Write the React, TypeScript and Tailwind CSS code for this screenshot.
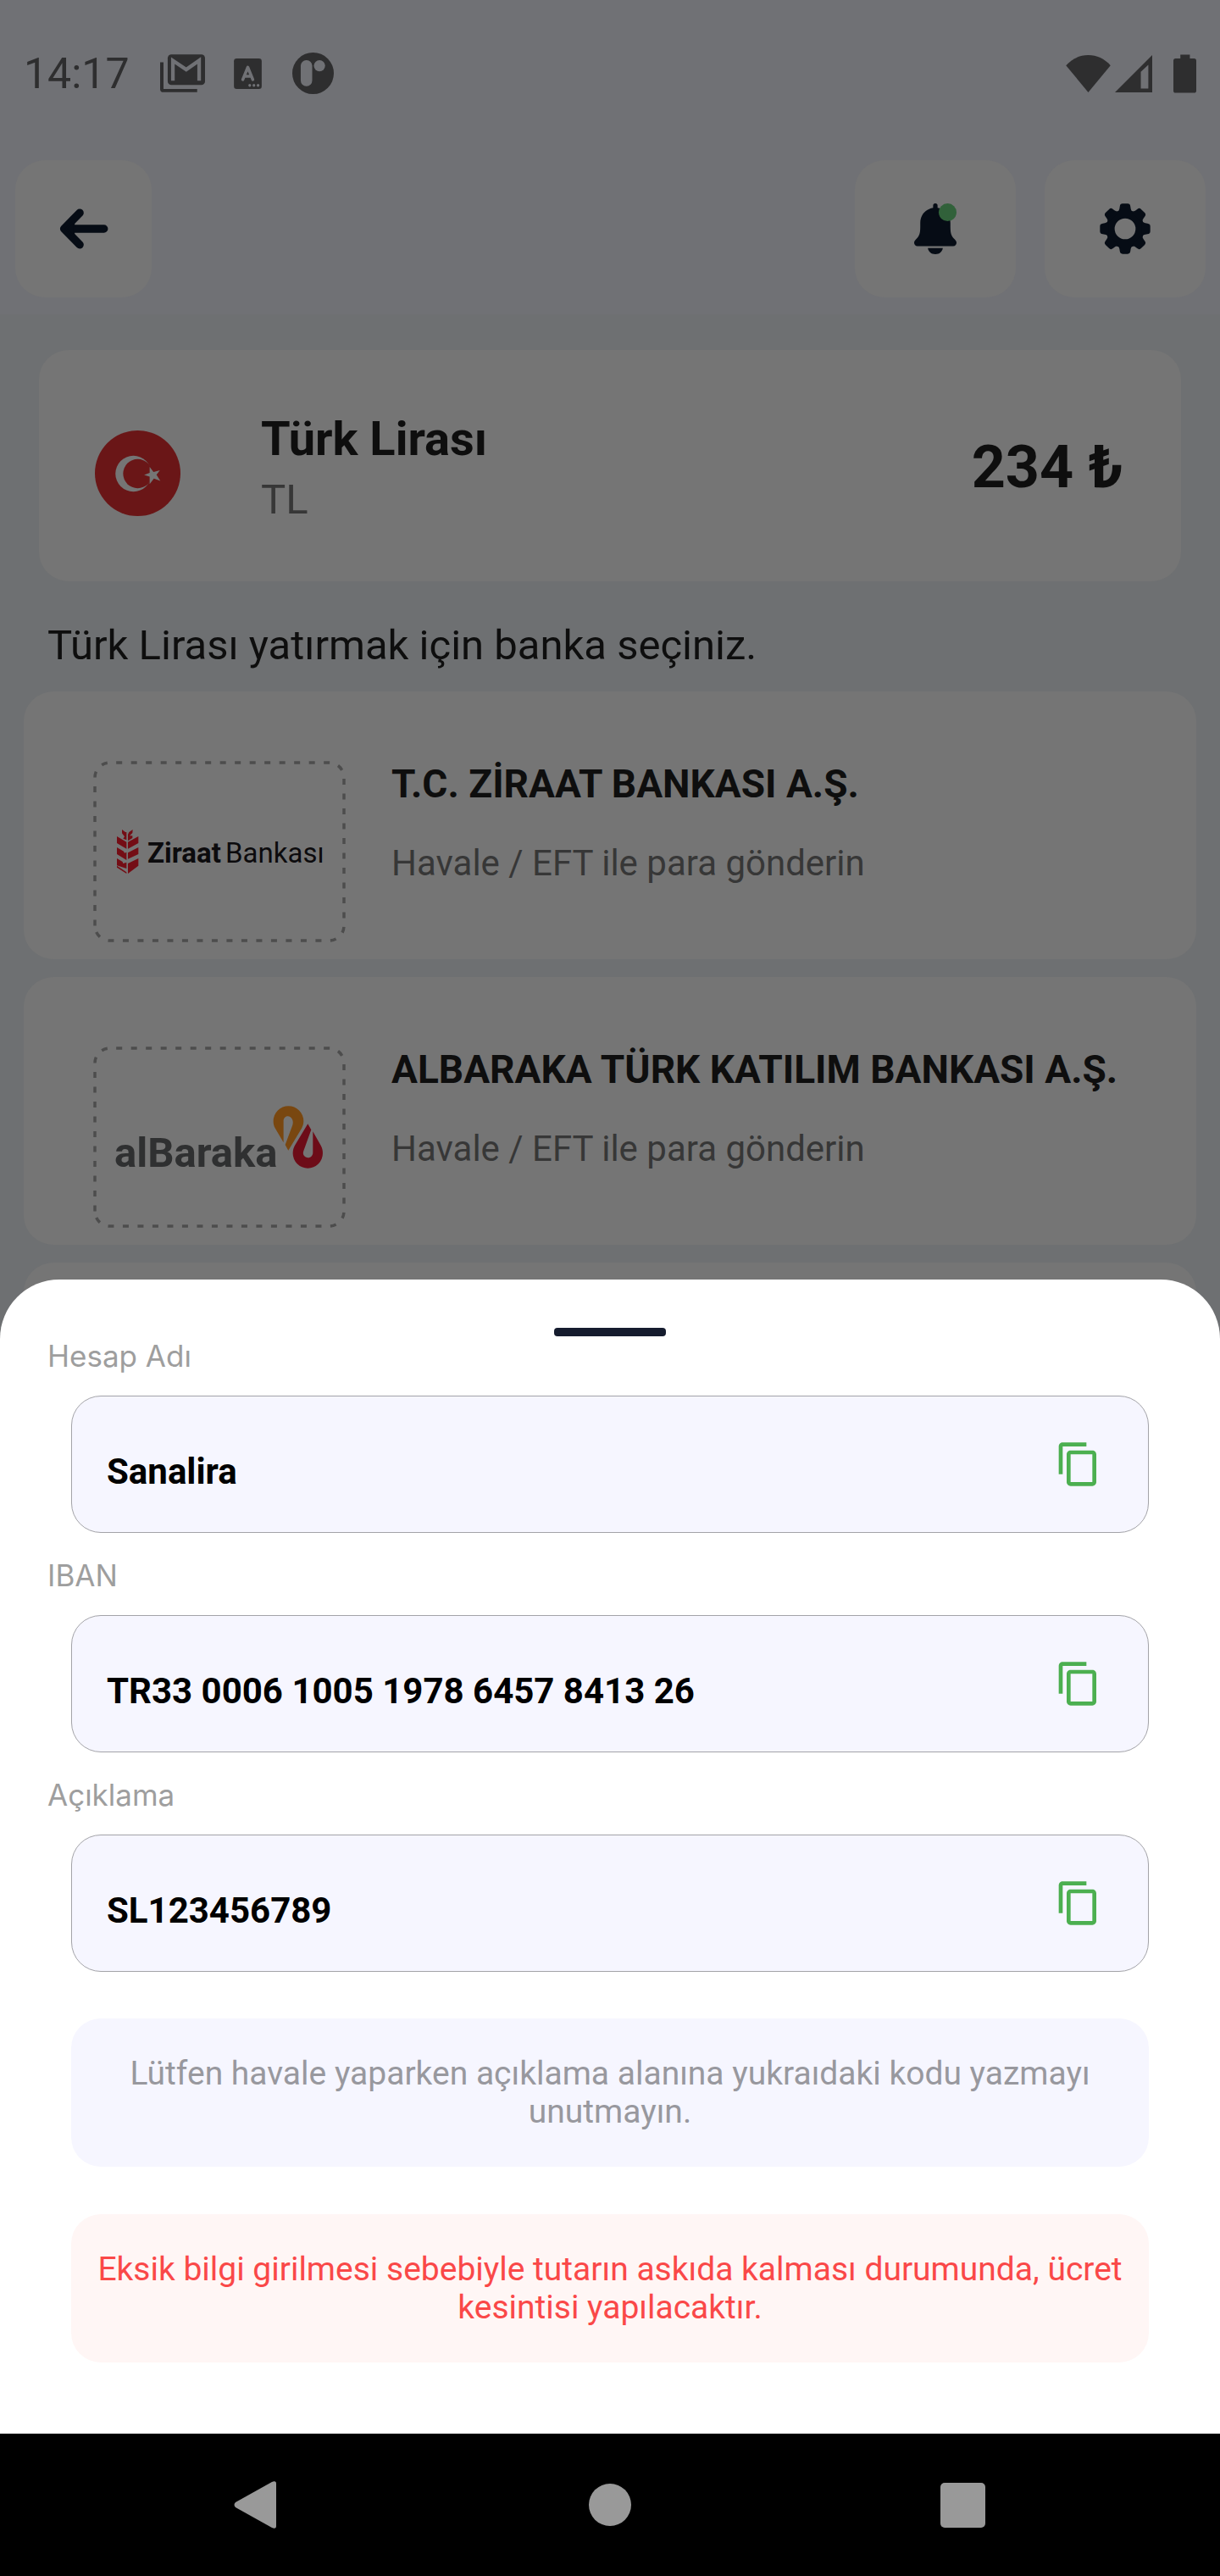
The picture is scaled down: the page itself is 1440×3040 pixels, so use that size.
import React from "react";
import { MdContentCopy } from "react-icons/md";

function GmailIcon() {
  return (
    <svg viewBox="0 0 160 135" className="h-[45px] w-[53px]" aria-hidden="true">
      <path d="M0 28h12v95h120v12H12a12 12 0 0 1-12-12Z" fill="#2e2e2f" />
      <rect x="27" y="0" width="133" height="109" rx="13" fill="#2e2e2f" />
      <path d="M45.500 94V22L93 54l46-32v72" fill="none" stroke="#707175" strokeWidth="13" />
    </svg>
  );
}

function KeyboardIcon() {
  return (
    <svg viewBox="0 0 100 110" className="h-9 w-[33px]" aria-hidden="true">
      <rect width="100" height="110" rx="10" fill="#2e2e2f" />
      <path d="M32 76 50 32l18 44M39 64h22" fill="none" stroke="#707175" strokeWidth="11" strokeLinecap="round" strokeLinejoin="round" />
      <g fill="#707175">
        <circle cx="57" cy="97" r="5" />
        <circle cx="72" cy="97" r="5" />
        <circle cx="87" cy="97" r="5" />
      </g>
    </svg>
  );
}

function AppDotIcon() {
  return (
    <svg viewBox="0 0 148 148" className="size-[49px]" aria-hidden="true">
      <circle cx="74" cy="74" r="74" fill="#2e2e2f" />
      <rect x="30" y="27" width="41" height="93" rx="20" fill="#707175" />
      <circle cx="97" cy="47" r="20" fill="#707175" />
    </svg>
  );
}

function StatusBar() {
  return (
    <div className="flex h-[173px] items-center justify-between px-7">
      <div className="flex items-center">
        <span className="w-[161px] text-[50px] leading-[58px] text-[#2e2e2f]">14:17</span>
        <GmailIcon />
        <span className="ml-[34px] flex">
          <KeyboardIcon />
        </span>
        <span className="ml-9 flex">
          <AppDotIcon />
        </span>
      </div>
      <div className="flex items-center">
        <svg viewBox="0 0 160 134" className="h-11 w-[53px]" fill="#2e2e2f" aria-hidden="true">
          <path d="M80 134 0 37C22 13 50 0 80 0s58 13 80 37Z" />
        </svg>
        <svg viewBox="0 0 134 134" className="ml-[5px] size-11" fill="#2e2e2f" aria-hidden="true">
          <path fillRule="evenodd" d="M0 134 134 0v134ZM93 60v60h27V35Z" />
        </svg>
        <svg viewBox="0 0 82 137" className="ml-[25px] h-[46px] w-[27px]" fill="#2e2e2f" aria-hidden="true">
          <path d="M25 0h34v14h15a8 8 0 0 1 8 8v107a8 8 0 0 1-8 8H8a8 8 0 0 1-8-8V22a8 8 0 0 1 8-8h17Z" />
        </svg>
      </div>
    </div>
  );
}

function BackIcon() {
  return (
    <svg viewBox="0 0 176 146" className="h-12 w-[58px]" fill="none" stroke="#060c15" strokeWidth="29" strokeLinecap="round" strokeLinejoin="round" aria-hidden="true">
      <path d="M160 73H20M73 16 17 73l56 57" />
      <path d="M24 73 52 46v54Z" fill="#060c15" strokeWidth="6" />
    </svg>
  );
}

function BellIcon() {
  return (
    <svg viewBox="0 0 152 182" className="h-[60px] w-[50px]" aria-hidden="true">
      <path
        fill="#060c15"
        d="M68 8a8 8 0 0 1 16 0v8c28 5 46 26 46 54v14c0 24 4 34 15 44 5 5 7 8 7 13 0 7-5 12-12 12H12c-7 0-12-5-12-12 0-5 2-8 7-13 11-10 15-20 15-44V70c0-28 18-49 46-54Z"
      />
      <path fill="#060c15" d="M49 160h54c-3 14-12 22-27 22s-24-8-27-22Z" />
      <circle cx="120" cy="32" r="32" fill="#31613a" />
    </svg>
  );
}

const TEETH = [0, 45, 90, 135, 180, 225, 270, 315];

function GearIcon() {
  return (
    <svg viewBox="-91 -91 182 182" className="size-[60px]" fill="#060c15" aria-hidden="true">
      <circle r="53" fill="none" stroke="#060c15" strokeWidth="31" />
      {TEETH.map((a) => (
        <path
          key={a}
          transform={`rotate(${a})`}
          d="M-30-58C-23-63-20-68-19-80c1-7 4-10 10-10H9c6 0 9 3 10 10 1 12 4 17 11 22Z"
        />
      ))}
    </svg>
  );
}

function TurkishFlag() {
  return (
    <svg viewBox="0 0 100 100" className="mt-[15px] size-[101px] shrink-0" role="img" aria-label="Türk bayrağı">
      <circle cx="50" cy="50" r="50" fill="#6a1617" />
      <circle cx="45" cy="50.500" r="21" fill="#757575" />
      <circle cx="50" cy="50.500" r="17" fill="#6a1617" />
      <path fill="#757575" d="m76 46.500-4 5.300 4.500 7-7.500-2.600-5 6.300V54l-6.500-2 6.500-2.500V42.500l4.500 6Z" />
    </svg>
  );
}

function DashedFrame() {
  return (
    <path
      d="M2 194.500V19.500A17.500 17.500 0 0 1 19.500 2h259A17.500 17.500 0 0 1 296 19.500v175a17.500 17.500 0 0 1-17.500 17.500h-259A17.500 17.500 0 0 1 2 194.500Z"
      fill="none"
      stroke="#4d4d4d"
      strokeWidth="3.5"
      strokeDasharray="7 10.5"
    />
  );
}

function ZiraatLogo() {
  return (
    <svg viewBox="0 0 298 214" className="h-[214px] w-[298px]" role="img" aria-label="Ziraat Bankası">
      <DashedFrame />
      <g transform="translate(28 81) scale(.3333)" fill="#740d15">
        <path d="M0 24 34 44v24L0 48ZM0 63l24 14 3 6 7-3v28L0 87ZM0 102l20 12 2 6 12-4v22L0 127Z" />
        <path d="M76 24 39 44v24l37-20ZM76 63 39 82v22l37-17ZM76 102l-37 18v36l37-28ZM0 128l34 23v5L0 134Z" />
        <path d="M18 0l12 9h4v28l-12-5 5-7-9-12ZM56 0 43 9l-4 8v23l16-10v-8H45l10-10Z" />
      </g>
      <g fill="#0c0b0d" fontFamily="Roboto, sans-serif" fontSize="33">
        <text x="64" y="120" fontWeight="700">Ziraat</text>
        <text x="156" y="120">Bankası</text>
      </g>
    </svg>
  );
}

function AlbarakaLogo() {
  return (
    <svg viewBox="0 0 298 214" className="h-[214px] w-[298px]" role="img" aria-label="Albaraka">
      <DashedFrame />
      <text x="25" y="142" fill="#2f3031" fontFamily="Roboto, sans-serif" fontSize="49" fontWeight="700">
        alBaraka
      </text>
      <g transform="translate(-30 -25) scale(.3333)">
        <path
          fill="#794710"
          d="M764 415 734 364c-4-7-6-15-6-25a53 53 0 0 1 107 0c0 10-3 19-7 26l-47 78-11-20 26-70c5-14-3-31-17-31-9 0-15 8-15 17Z"
        />
        <path
          fill="#6d0c18"
          d="m850 349 12 21-27 75c-5 13 4 24 16 24 10 0 17-8 17-18v-75l28 49c5 9 7 17 7 28a53 53 0 0 1-106 0c0-11 3-20 8-29Z"
        />
      </g>
    </svg>
  );
}

function BankCard({ name, logo }: { name: string; logo: React.ReactNode }) {
  return (
    <button type="button" className="flex h-[316px] items-start rounded-[35px] bg-[#757575] pt-[82px] pl-[82px] text-left">
      <span className="shrink-0">{logo}</span>
      <span className="mt-px ml-[54px] flex flex-col gap-[42px]">
        <span className="text-[46px] leading-[53px] font-bold whitespace-nowrap text-[#0e0e0e]">{name}</span>
        <span className="text-[42px] leading-[49px] text-[#373737]">Havale / EFT ile para gönderin</span>
      </span>
    </button>
  );
}

const FIELDS = [
  { id: "account", label: "Hesap Adı", value: "Sanalira" },
  { id: "iban", label: "IBAN", value: "TR33 0006 1005 1978 6457 8413 26" },
  { id: "note", label: "Açıklama", value: "SL123456789" },
];

function CopyField({ id, label, value }: { id: string; label: string; value: string }) {
  return (
    <div className="flex flex-col">
      <label htmlFor={id} className="ml-14 font-['Inter',sans-serif] text-[35px] leading-[42px] text-[#9e9e9e]">
        {label}
      </label>
      <div className="mx-[84px] mt-[26px] flex h-[162px] items-center rounded-[35px] border border-[#a3a3a8] bg-[#f6f6ff] pr-[54px] pl-[41px]">
        <input
          id={id}
          readOnly
          value={value}
          className="h-full min-w-0 flex-1 bg-transparent pt-4 text-[42px] font-bold text-black outline-none"
        />
        <button type="button" aria-label={`${label} kopyala`} className="text-[#4caf50]">
          <MdContentCopy className="size-14" />
        </button>
      </div>
    </div>
  );
}

function BottomSheet() {
  return (
    <section className="relative -mt-[100px] flex flex-1 flex-col rounded-t-[70px] bg-white pt-[57px] pb-[84px]">
      <div className="mx-auto h-2.5 w-[132px] rounded-[4px] bg-[#151c2e]" />
      <div className="mt-0.5 flex flex-col gap-[29px]">
        {FIELDS.map((f) => (
          <CopyField key={f.id} {...f} />
        ))}
      </div>
      <p className="mx-[84px] mt-[55px] rounded-[35px] bg-[#f6f6ff] px-6 pt-[43px] pb-[42px] text-center text-[39px] leading-[45px] text-[#98989e]">
        Lütfen havale yaparken açıklama alanına yukraıdaki kodu yazmayı unutmayın.
      </p>
      <p className="mx-[84px] mt-14 rounded-[35px] bg-[#fff6f5] px-6 pt-[43px] pb-[42px] text-center text-[39px] leading-[45px] text-[#fa4848]">
        Eksik bilgi girilmesi sebebiyle tutarın askıda kalması durumunda, ücret kesintisi yapılacaktır.
      </p>
    </section>
  );
}

function NavigationBar() {
  return (
    <nav className="grid h-[168px] grid-cols-3 place-items-center bg-black px-24">
      <button type="button" aria-label="Geri">
        <svg viewBox="0 0 56 56" className="size-14" fill="#999" aria-hidden="true">
          <path d="M2 25 45 1q5-2 5 2v50q0 4-5 2L2 31q-3-3 0-6Z" />
        </svg>
      </button>
      <button type="button" aria-label="Ana ekran" className="size-[50px] rounded-full bg-[#999]" />
      <button type="button" aria-label="Son uygulamalar" className="size-[53px] rounded-[5px] bg-[#999]" />
    </nav>
  );
}

export default function App() {
  return (
    <div className="flex min-h-screen flex-col bg-[#6e7072] font-['Roboto',sans-serif]">
      <header className="bg-[#707175] pb-5">
        <StatusBar />
        <div className="flex justify-between pt-4 pr-[17px] pl-[18px]">
          <button type="button" aria-label="Geri" className="flex h-[162px] w-[161px] items-center justify-center rounded-[35px] bg-[#757575]">
            <BackIcon />
          </button>
          <div className="flex gap-[34px]">
            <button type="button" aria-label="Bildirimler" className="flex h-[162px] w-[190px] items-center justify-center rounded-[35px] bg-[#757575]">
              <BellIcon />
            </button>
            <button type="button" aria-label="Ayarlar" className="flex h-[162px] w-[190px] items-center justify-center rounded-[35px] bg-[#757575]">
              <GearIcon />
            </button>
          </div>
        </div>
      </header>

      <main className="flex flex-col">
        <section className="mx-[46px] mt-[42px] flex h-[273px] items-center rounded-[35px] bg-[#757575] pt-[3px] pr-[68px] pl-[66px]">
          <TurkishFlag />
          <div className="ml-[95px] flex flex-1 flex-col gap-2.5">
            <span className="text-[56px] leading-[66px] font-bold text-[#0e0e0e]">Türk Lirası</span>
            <span className="text-[49px] leading-[57px] text-[#373737]">TL</span>
          </div>
          <span className="text-[70px] leading-[82px] font-bold text-[#0e0e0e]">234 ₺</span>
        </section>

        <h1 className="mt-[47px] mb-[25px] ml-14 text-[49px] leading-[58px] text-[#0e0e0e]">
          Türk Lirası yatırmak için banka seçiniz.
        </h1>

        <div className="flex flex-col gap-[21px] px-7">
          <BankCard name="T.C. ZİRAAT BANKASI A.Ş." logo={<ZiraatLogo />} />
          <BankCard name="ALBARAKA TÜRK KATILIM BANKASI A.Ş." logo={<AlbarakaLogo />} />
          <div className="h-[120px] rounded-t-[35px] bg-[#757575]" />
        </div>
      </main>

      <BottomSheet />
      <NavigationBar />
    </div>
  );
}
